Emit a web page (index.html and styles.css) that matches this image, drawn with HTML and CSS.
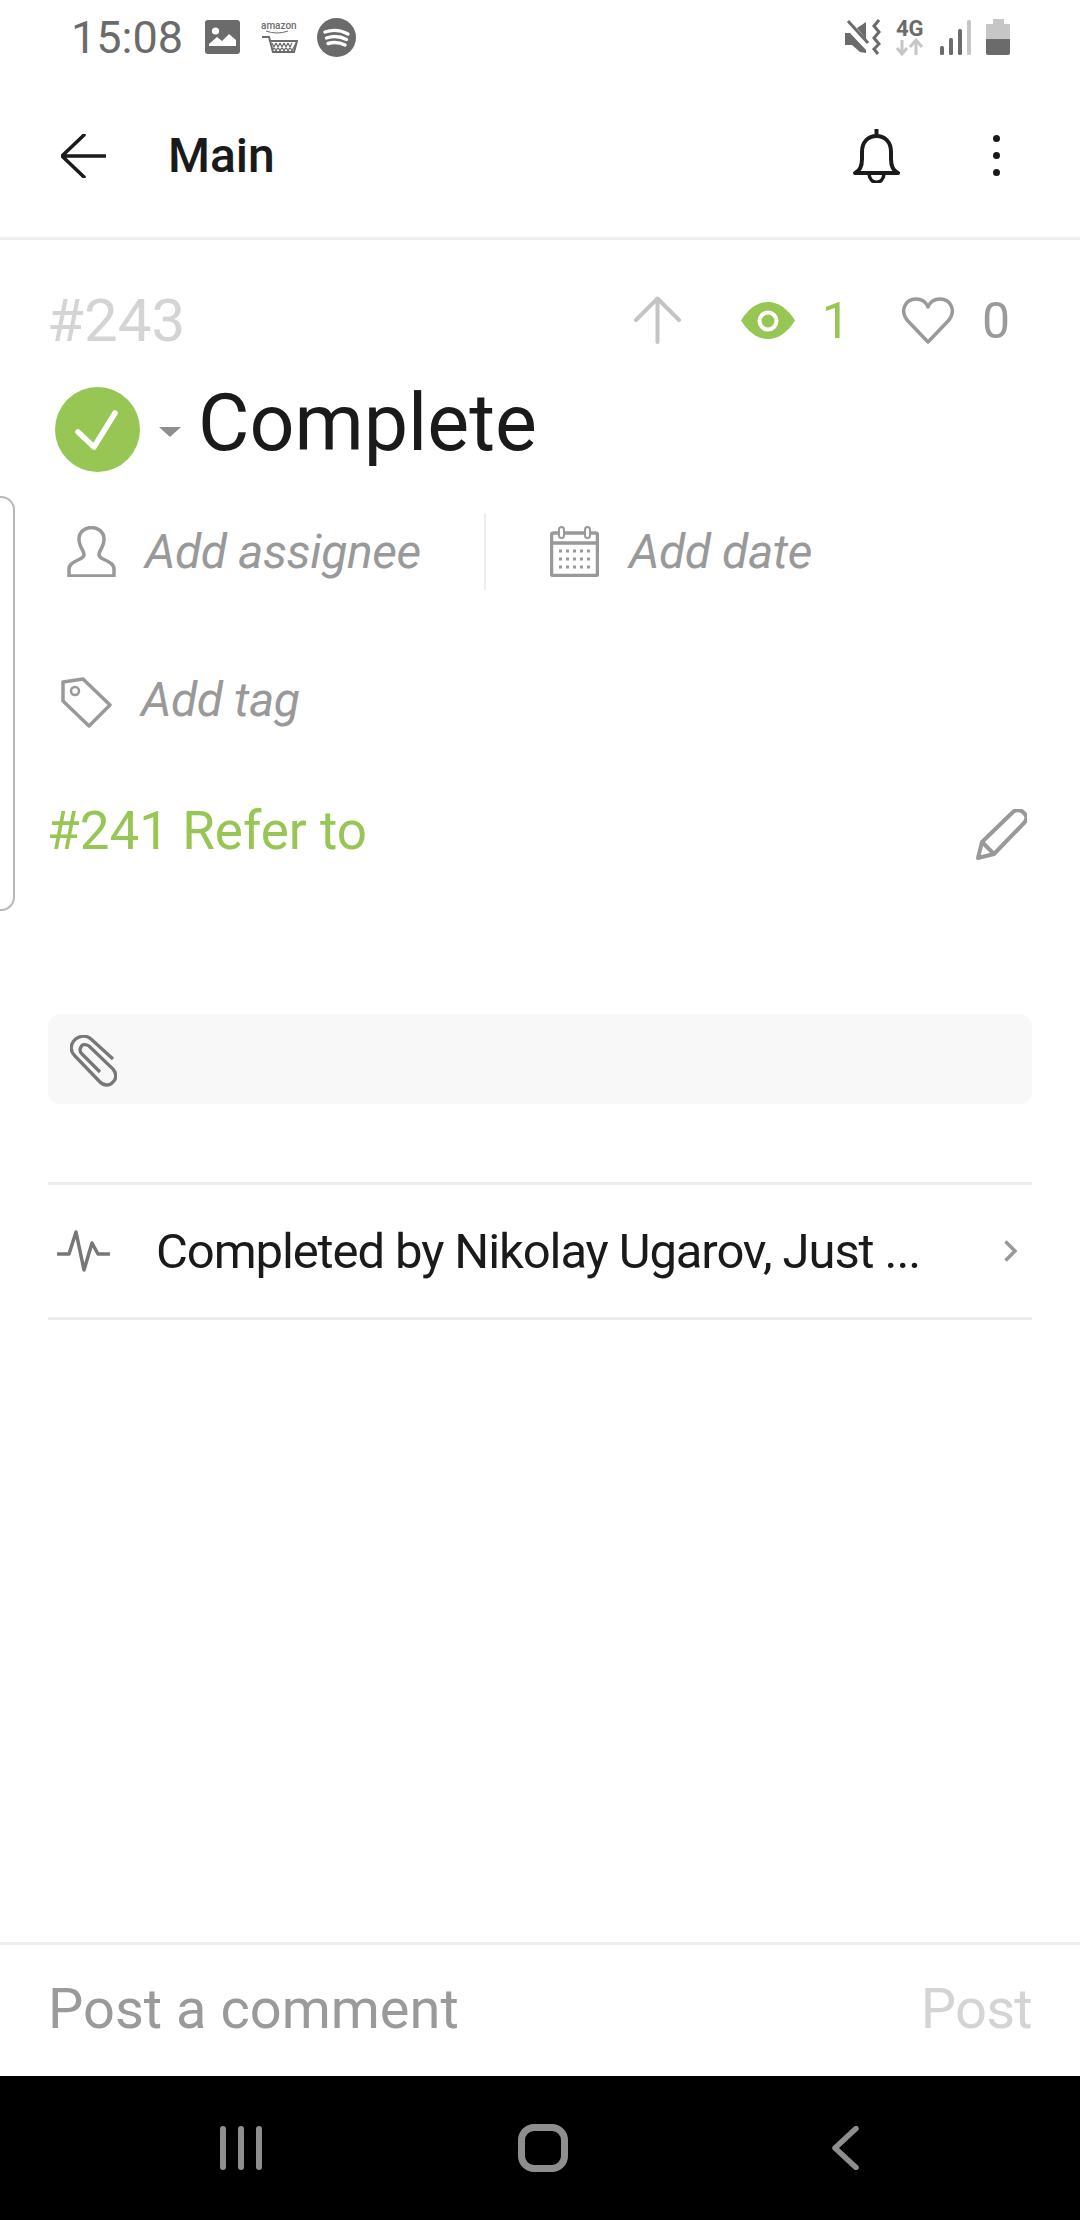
FILE: index.html
```html
<!DOCTYPE html>
<html lang="en">
<head>
    <meta charset="UTF-8">
    <meta name="viewport" content="width=device-width, initial-scale=1.0">
    <title>Main</title>
    <link rel="stylesheet" href="styles.css">
</head>
<body>
    <div class="page">
        <div class="status-bar">
            <span class="time">15:08</span>
            <svg class="ic-image" width="35" height="34" viewBox="0 0 35 34">
                <rect width="35" height="34" rx="3" fill="#6b6b6b"/>
                <circle cx="10.5" cy="11" r="3.6" fill="#fff"/>
                <path d="M4 26 L4 24 L12 17 L17 21 L24 14 L31 20 L31 26 Z" fill="#fff"/>
            </svg>
            <svg class="ic-amazon" width="37" height="32" viewBox="0 0 37 32">
                <text x="0" y="8" class="amazon-word">amazon</text>
                <path d="M5 10 Q16 14 27 10" fill="none" stroke="#6b6b6b" stroke-width="1"/>
                <path d="M1 16 H8 L12 31 H33 L36 20 H9" fill="none" stroke="#6b6b6b" stroke-width="2"/>
                <path d="M11 22 L15 30 M15 22 L19 30 M19 22 L23 30 M23 22 L27 30 M27 22 L31 30 M15 22 L11 30 M19 22 L15 30 M23 22 L19 30 M27 22 L23 30 M31 22 L27 30 M35 22 L31 30" stroke="#6b6b6b" stroke-width="1.2"/>
            </svg>
            <svg class="ic-spotify" width="39" height="39" viewBox="0 0 39 39">
                <circle cx="19.5" cy="19.5" r="19.5" fill="#6b6b6b"/>
                <path d="M8 14 Q20 10 31 16 M9.500 20 Q20 16.500 29.500 21.500 M11 25.500 Q20 23 28 27" fill="none" stroke="#fff" stroke-width="3.400" stroke-linecap="round"/>
            </svg>
            <div class="status-right">
                <svg width="36" height="36" viewBox="0 0 36 36">
                    <path d="M0 14 H5 L21 31 V34 L15 33 L7 26 H0 Z M12 9 L21 3 V20 Z" fill="#6b6b6b"/>
                    <path d="M3 2 L23 24" stroke="#6b6b6b" stroke-width="3"/>
                    <path d="M34 1 L29 7 L34 13 L29 19 L34 25 L29 30 L33 35" fill="none" stroke="#6b6b6b" stroke-width="3"/>
                </svg>
                <svg class="ic-net" width="30" height="42" viewBox="0 -4 30 42">
                    <text x="1" y="18" class="net-word">4G</text>
                    <path d="M7 22 V35 M2 30 L7 36 L12 30" fill="none" stroke="#c6c6c6" stroke-width="3"/>
                    <path d="M21 37 V23 M15 29 L21 22 L27 29" fill="none" stroke="#c6c6c6" stroke-width="3"/>
                </svg>
                <svg class="ic-signal" width="31" height="35" viewBox="0 0 31 35">
                    <rect x="0" y="26" width="4" height="9" rx="1.500" fill="#6b6b6b"/>
                    <rect x="9" y="18" width="4" height="17" rx="1.500" fill="#6b6b6b"/>
                    <rect x="18" y="9" width="4" height="26" rx="1.500" fill="#6b6b6b"/>
                    <rect x="27" y="0" width="4" height="35" rx="1.500" fill="#c6c6c6"/>
                </svg>
                <svg class="ic-battery" width="24" height="36" viewBox="0 0 24 36">
                    <path d="M7 0 H18 V5 H24 V20 H0 V5 H7 Z" fill="#c6c6c6"/>
                    <path d="M0 20 H24 V34 Q24 36 22 36 H2 Q0 36 0 34 Z" fill="#6b6b6b"/>
                </svg>
            </div>
        </div>

        <div class="app-bar">
            <svg class="ic-back" width="45" height="44" viewBox="0 0 45 44">
                <path d="M44 22 H2 M23 1 L1 22 L23 43" fill="none" stroke="#1a1a1a" stroke-width="3.500" stroke-linecap="round" stroke-linejoin="round"/>
            </svg>
            <span class="app-title">Main</span>
            <svg class="ic-bell" width="47" height="54" viewBox="0 0 47 54">
                <path d="M23.500 1 V7 M2 44 Q9 41 9 30 V23 C9 13 15 7 23.500 7 C32 7 38 13 38 23 V30 Q38 41 45 44 Z" fill="none" stroke="#1a1a1a" stroke-width="4" stroke-linecap="round" stroke-linejoin="round"/>
                <path d="M16 45 C17 56 30 56 31 45" fill="none" stroke="#1a1a1a" stroke-width="3.500"/>
            </svg>
            <div class="dots"><i></i><i></i><i></i></div>
        </div>

        <div class="side-handle"></div>

        <div class="task">
            <div class="meta-row">
                <span class="task-no">#243</span>
                <div class="meta-stats">
                    <svg class="ic-up" width="47" height="48" viewBox="0 0 47 48">
                        <path d="M23.500 46 V2.500 M2 24 L23.500 2.500 L45 24" fill="none" stroke="#c4c4c4" stroke-width="4" stroke-linecap="round" stroke-linejoin="round"/>
                    </svg>
                    <svg class="ic-eye" width="54" height="37" viewBox="0 0 54 37">
                        <path d="M0 18.500 C8 6 17 0 27 0 C37 0 46 6 54 18.500 C46 31 37 37 27 37 C17 37 8 31 0 18.500 Z" fill="#97c655"/>
                        <circle cx="27" cy="19" r="8.500" fill="none" stroke="#fff" stroke-width="4"/>
                    </svg>
                    <span class="stat stat-green">1</span>
                    <svg class="ic-heart" width="52" height="47" viewBox="0 0 52 47">
                        <path d="M26 45 L5 23 C-2 14 3 2 14 2 C20 2 24 5 26 10 C28 5 32 2 38 2 C49 2 54 14 47 23 Z" fill="none" stroke="#9a9a9a" stroke-width="3.500" stroke-linejoin="round"/>
                    </svg>
                    <span class="stat">0</span>
                </div>
            </div>

            <div class="title-row">
                <div class="status-dot">
                    <svg width="85" height="85" viewBox="0 0 85 85">
                        <path d="M23 45 L39 60 L60 26" fill="none" stroke="#fff" stroke-width="5.500" stroke-linecap="round" stroke-linejoin="round"/>
                    </svg>
                </div>
                <span class="caret"></span>
                <h1 class="task-title">Complete</h1>
            </div>

            <div class="assign-row">
                <div class="assign-cell assignee">
                    <svg width="49" height="51" viewBox="0 0 49 51">
                        <path d="M2 50 H47 V43 C47 38 42 36 36 33 C32 31 31 29 33 25 C36 20 37 16 37 13 C37 6 31 1.500 24.500 1.500 C18 1.500 12 6 12 13 C12 16 13 20 16 25 C18 29 17 31 13 33 C7 36 2 38 2 43 Z" fill="none" stroke="#999" stroke-width="3.500" stroke-linejoin="round"/>
                    </svg>
                    <span class="hint">Add assignee</span>
                </div>
                <div class="assign-cell date">
                    <svg width="49" height="51" viewBox="0 0 49 51">
                        <rect x="1.500" y="7" width="46" height="42.500" rx="2" fill="none" stroke="#999" stroke-width="3.500"/>
                        <path d="M1.500 17 H47.500" stroke="#999" stroke-width="3.500"/>
                        <rect x="9" y="1" width="5" height="11" rx="2.500" fill="#fff" stroke="#999" stroke-width="2"/>
                        <rect x="35" y="1" width="5" height="11" rx="2.500" fill="#fff" stroke="#999" stroke-width="2"/>
                        <path d="M9 25 H41 M9 33 H41 M9 41 H41" stroke="#999" stroke-width="3" stroke-dasharray="3 4"/>
                    </svg>
                    <span class="hint">Add date</span>
                </div>
            </div>

            <div class="tag-row">
                <svg width="51" height="51" viewBox="0 0 51 51">
                    <path d="M2 5 L22 2 L49 28 L28 49 L2 24 Z" fill="none" stroke="#999" stroke-width="3.500" stroke-linejoin="round"/>
                    <circle cx="14" cy="14" r="4" fill="none" stroke="#999" stroke-width="2.500"/>
                </svg>
                <span class="hint">Add tag</span>
            </div>

            <div class="refer-row">
                <span class="refer-text">#241 Refer to</span>
                <svg width="51" height="51" viewBox="0 0 51 51">
                    <path d="M2 49 L6 33 L37 3 C41 0 45 1 48 4 C51 7 51 11 48 14 L18 45 Z M6 33 L18 45" fill="none" stroke="#999" stroke-width="4" stroke-linejoin="round"/>
                </svg>
            </div>

            <div class="attach-box">
                <svg width="47" height="52" viewBox="0 0 47 52">
                    <path d="M43 24 L21 4 C15 -1 7 1 3 7 C0 12 1 17 5 21 L30 47 C34 51 40 51 43 47 C47 43 46 38 43 34 L19 11 C16 9 12 9 11 12 C9 15 10 17 12 19 L30 37" fill="none" stroke="#777" stroke-width="3.300"/>
                </svg>
            </div>

            <div class="activity-row">
                <svg width="53" height="42" viewBox="0 0 53 42">
                    <path d="M1 24 H12 L19 2 L27 40 L35 13 L41 24 H52" fill="none" stroke="#777" stroke-width="3.500" stroke-linecap="round" stroke-linejoin="round"/>
                </svg>
                <span class="activity-text">Completed by Nikolay Ugarov, Just ...</span>
                <svg class="ic-chevron" width="13" height="22" viewBox="0 0 13 22">
                    <path d="M1.500 1.500 L11 11 L1.500 20.500" fill="none" stroke="#999" stroke-width="3.500"/>
                </svg>
            </div>
        </div>

        <div class="comment-bar">
            <span class="comment-input">Post a comment</span>
            <span class="comment-post">Post</span>
        </div>

        <div class="nav-bar">
            <div class="nav-recent"><i></i><i></i><i></i></div>
            <div class="nav-home"></div>
            <svg class="nav-back" width="27" height="44" viewBox="0 0 27 44">
                <path d="M24 2.500 L3 22 L24 41.500" fill="none" stroke="#8e8e8e" stroke-width="5.500" stroke-linecap="round" stroke-linejoin="round"/>
            </svg>
        </div>
    </div>
</body>
</html>
```

FILE: styles.css
```css
* {
    box-sizing: border-box;
}

body {
    margin: 0;
    background: #fff;
    font-family: Roboto, 'Liberation Sans', sans-serif;
}

svg {
    display: block;
    flex: none;
}

.page {
    position: relative;
    display: flex;
    flex-direction: column;
    width: 1080px;
    height: 2220px;
    overflow: hidden;
}

/* status bar */
.status-bar {
    display: flex;
    align-items: center;
    height: 74px;
    padding: 0 70px 0 71px;
}

.time {
    width: 134px;
    font-size: 45px;
    color: #6b6b6b;
}

.ic-amazon {
    margin-left: 21px;
}

.amazon-word {
    font-size: 10px;
    font-weight: 500;
    fill: #6b6b6b;
}

.ic-spotify {
    margin-left: 19px;
}

.status-right {
    display: flex;
    align-items: center;
    margin-left: auto;
}

.ic-net {
    margin: -4px 0 0 14px;
}

.net-word {
    font-size: 22px;
    font-weight: 700;
    fill: #6b6b6b;
}

.ic-signal {
    margin-left: 15px;
}

.ic-battery {
    margin-left: 15px;
}

/* app bar */
.app-bar {
    display: flex;
    align-items: center;
    height: 166px;
    padding: 6px 80px 6px 61px;
    border-bottom: 3px solid #eeeeee;
}

.app-title {
    margin-left: 62px;
    font-size: 48px;
    font-weight: 500;
    color: #1a1a1a;
}

.ic-bell {
    margin-left: auto;
}

.dots {
    display: flex;
    flex-direction: column;
    gap: 10px;
    margin-left: 93px;
}

.dots i {
    width: 7px;
    height: 7px;
    border-radius: 50%;
    background: #1a1a1a;
}

/* edge panel handle, sits over the page */
.side-handle {
    position: absolute;
    left: -20px;
    top: 496px;
    width: 35px;
    height: 415px;
    border: 2px solid #b8b8b8;
    border-radius: 14px;
}

/* task */
.task {
    display: flex;
    flex-direction: column;
    padding: 0 48px;
}

.meta-row {
    display: flex;
    align-items: center;
    height: 60px;
    margin-top: 50px;
}

.task-no {
    margin-left: -1px;
    font-size: 60px;
    color: #d4d4d4;
}

.meta-stats {
    display: flex;
    align-items: center;
    margin-left: auto;
    padding-right: 22px;
}

.ic-eye {
    margin-left: 60px;
}

.stat {
    margin: 2px 0 0 28px;
    font-size: 50px;
    color: #9a9a9a;
}

.stat-green {
    margin-left: 27px;
    color: #97c655;
}

.ic-heart {
    margin-left: 52px;
}

.title-row {
    display: flex;
    align-items: center;
    height: 85px;
    margin-top: 37px;
    padding-left: 7px;
}

.status-dot {
    width: 85px;
    height: 85px;
    border-radius: 50%;
    background: #97c655;
}

.caret {
    width: 0;
    height: 0;
    margin: 4px 0 0 19px;
    border-top: 10px solid #8e8e8e;
    border-left: 11px solid transparent;
    border-right: 11px solid transparent;
}

.task-title {
    margin: 0 0 13px 17px;
    font-size: 79px;
    font-weight: 400;
    color: #1a1a1a;
}

.assign-row {
    display: flex;
    align-items: center;
    height: 77px;
    margin-top: 41px;
}

.assign-cell {
    display: flex;
    align-items: center;
    height: 100%;
}

.assignee {
    width: 438px;
    padding-left: 19px;
    border-right: 2px solid #eeeeee;
}

.date {
    padding-left: 64px;
}

.hint {
    margin-left: 29px;
    font-size: 48px;
    font-style: italic;
    letter-spacing: -0.4px;
    color: #999;
}

.date .hint {
    margin-left: 30px;
}

.tag-row {
    display: flex;
    align-items: center;
    height: 52px;
    margin-top: 86px;
    padding-left: 13px;
}

.tag-row .hint {
    margin-bottom: 5px;
}

.refer-row {
    display: flex;
    align-items: center;
    justify-content: space-between;
    height: 52px;
    margin-top: 80px;
    padding-right: 5px;
}

.refer-text {
    margin: 0 0 7px -1px;
    font-size: 53px;
    color: #97c655;
}

.attach-box {
    display: flex;
    align-items: center;
    height: 90px;
    margin-top: 154px;
    padding: 4px 0 0 22px;
    border-radius: 12px;
    background: #f8f8f8;
}

.activity-row {
    display: flex;
    align-items: center;
    height: 138px;
    margin-top: 78px;
    padding-left: 9px;
    border-top: 3px solid #ececec;
    border-bottom: 3px solid #ececec;
}

.activity-text {
    margin-left: 46px;
    font-size: 49px;
    letter-spacing: -1.1px;
    color: #1a1a1a;
}

.ic-chevron {
    margin-left: auto;
    margin-right: 15px;
}

/* comment box */
.comment-bar {
    display: flex;
    align-items: center;
    justify-content: space-between;
    height: 134px;
    margin-top: auto;
    padding: 0 48px 4px 48px;
    border-top: 3px solid #eeeeee;
    font-size: 56px;
}

.comment-input {
    color: #9a9a9a;
}

.comment-post {
    letter-spacing: -0.7px;
    color: #d4d4d4;
}

/* system nav */
.nav-bar {
    position: relative;
    display: flex;
    align-items: center;
    height: 144px;
    padding-left: 220px;
    background: #000;
}

.nav-recent {
    display: flex;
    gap: 12px;
}

.nav-recent i {
    width: 6px;
    height: 44px;
    border-radius: 3px;
    background: #8e8e8e;
}

.nav-home {
    width: 50px;
    height: 48px;
    margin-left: 256px;
    border: 7px solid #8e8e8e;
    border-radius: 16px;
}

.nav-back {
    margin-left: 264px;
}
```
